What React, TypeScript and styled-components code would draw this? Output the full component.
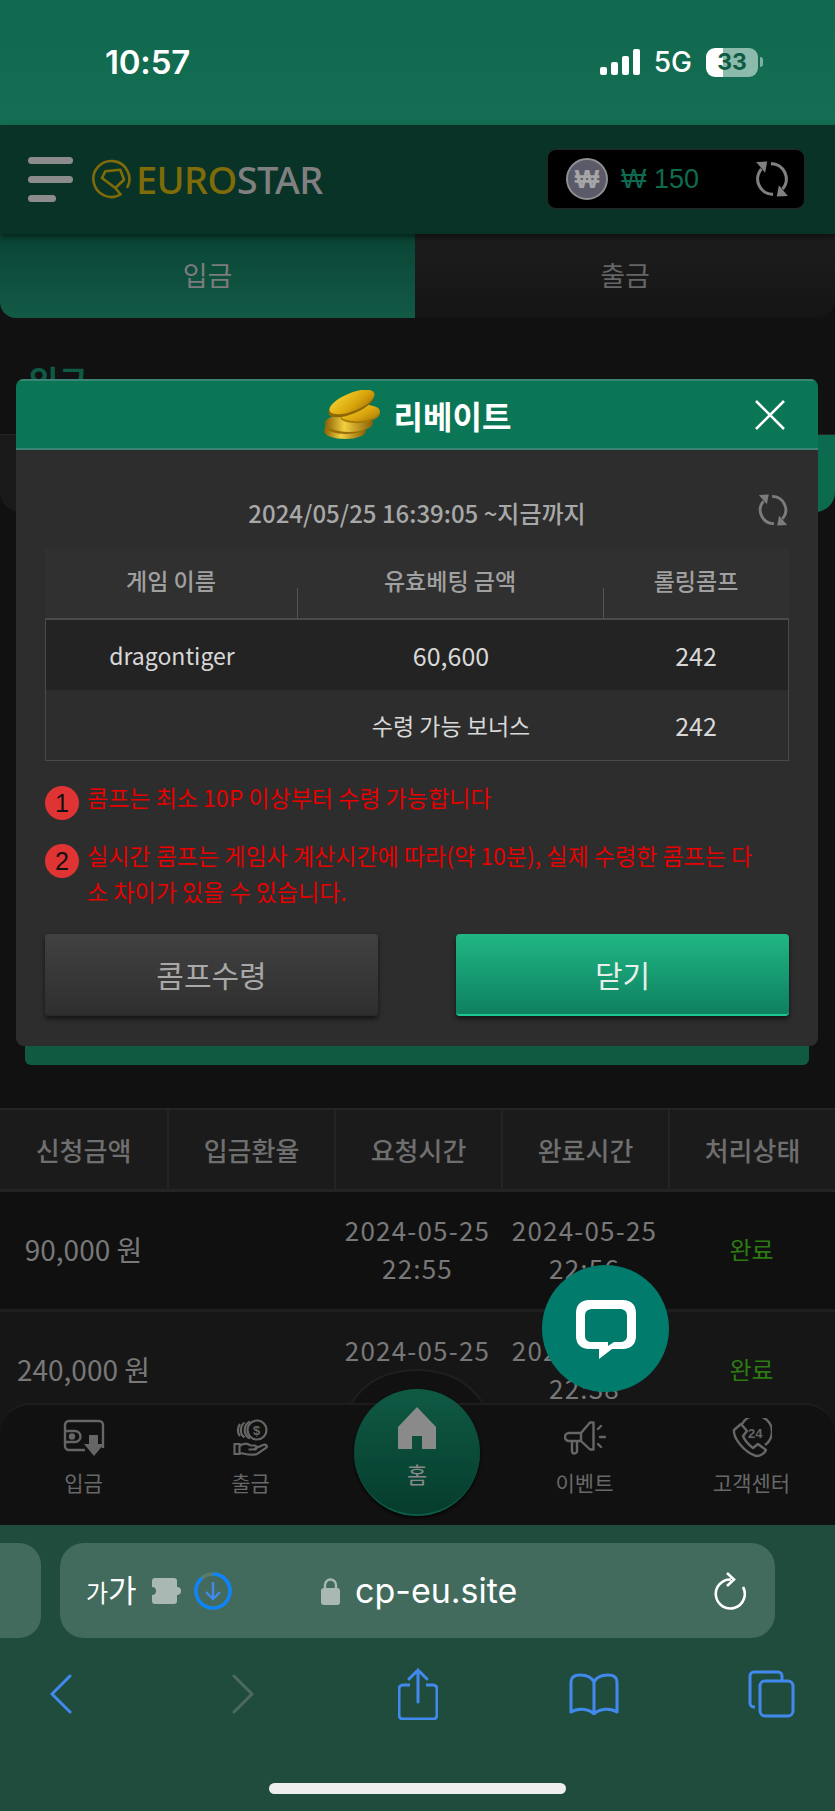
import React, { FunctionComponent } from 'react';
import styled, { createGlobalStyle } from 'styled-components';

const FONT = `"Noto Sans CJK KR", "Noto Sans", sans-serif`;

const GlobalStyle = createGlobalStyle`
    html, body {
        margin: 0;
        padding: 0;
        background: #111;
    }
    * {
        box-sizing: border-box;
    }
`;

const Phone = styled.div`
    width: 835px;
    height: 1811px;
    display: flex;
    flex-direction: column;
    overflow: hidden;
    font-family: ${FONT};
`;

/* ---------- iOS status bar ---------- */

const StatusBar = styled.div`
    height: 125px;
    flex: none;
    padding: 41px 72px 0 105px;
    display: flex;
    justify-content: space-between;
    align-items: flex-start;
    background: linear-gradient(180deg, #11694f, #136e53);
`;

const Clock = styled.div`
    font-family: Inter, sans-serif;
    font-size: 33px;
    line-height: 42px;
    font-weight: 600;
    letter-spacing: -0.2px;
    color: #fff;
`;

const StatusIcons = styled.div`
    display: flex;
    align-items: center;
    height: 42px;
`;

const NetworkLabel = styled.span`
    font-family: Inter, sans-serif;
    font-size: 28px;
    font-weight: 500;
    color: #fff;
    margin: 0 14px 0 13px;
`;

const Battery = styled.div`
    position: relative;
    width: 52px;
    height: 29px;
    border-radius: 9px;
    overflow: hidden;
    background: linear-gradient(90deg, #fff 0 33%, #8dbbab 33% 100%);
    font-family: Inter, sans-serif;
    font-size: 23px;
    line-height: 29px;
    font-weight: 700;
    text-align: center;
    color: #0f5a44;
`;

const BatteryNub = styled.div`
    width: 3px;
    height: 10px;
    margin-left: 2px;
    border-radius: 0 3px 3px 0;
    background: #7fb0a0;
`;

/* ---------- site header ---------- */

const Header = styled.header`
    height: 109px;
    flex: none;
    padding: 24px 30px 0 28px;
    display: flex;
    justify-content: space-between;
    align-items: flex-start;
    background: #0a3328;
    box-shadow: 0 3px 6px rgba(0, 0, 0, 0.5);
    position: relative;
    z-index: 1;
`;

const Brand = styled.div`
    display: flex;
    align-items: center;
    height: 60px;
`;

const Burger = styled.div`
    width: 45px;
    display: flex;
    flex-direction: column;
    gap: 12px;
    margin-right: 18px;
`;

const BurgerBar = styled.span<{ $short?: boolean }>`
    display: block;
    height: 7px;
    width: ${({ $short }) => ($short ? '28px' : '45px')};
    border-radius: 4px;
    background: #8c8c8c;
`;

const LogoText = styled.div`
    margin-left: 5px;
    font-family: 'Noto Sans', sans-serif;
    font-size: 38px;
    font-weight: 500;
    line-height: 60px;
    letter-spacing: -0.6px;
    color: #808080;
`;

const LogoGold = styled.span`
    color: #7f6c08;
`;

const Balance = styled.div`
    width: 258px;
    height: 60px;
    padding: 0 14px 0 18px;
    display: flex;
    align-items: center;
    background: #000;
    border: 1px solid #26262a;
    border-radius: 9px;
`;

const WonBadge = styled.div`
    width: 42px;
    height: 42px;
    flex: none;
    border-radius: 50%;
    background: #5a5a68;
    border: 2px solid #8f8f94;
    color: #a5a5a5;
    font-family: 'Liberation Sans', sans-serif;
    font-size: 26px;
    font-weight: 700;
    line-height: 38px;
    text-align: center;
`;

const BalanceValue = styled.div`
    flex: 1;
    margin-left: 13px;
    font-family: 'Liberation Sans', sans-serif;
    font-size: 27px;
    color: #0f6b4f;
`;

/* ---------- page behind the popup ---------- */

const Viewport = styled.main`
    position: relative;
    flex: 1;
    overflow: hidden;
    background: #111;
`;

const Tabs = styled.div`
    height: 84px;
    display: grid;
    grid-template-columns: 415px 1fr;
`;

const Tab = styled.div<{ $active?: boolean }>`
    display: flex;
    align-items: center;
    justify-content: center;
    padding-bottom: 3px;
    font-size: 27px;
    color: ${({ $active }) => ($active ? '#7c7c7c' : '#666')};
    background: ${({ $active }) =>
        $active ? 'linear-gradient(180deg, #0a4434, #125a46)' : 'linear-gradient(180deg, #1d1d1d, #151515)'};
    border-radius: ${({ $active }) => ($active ? '0 0 0 16px' : '0 0 16px 0')};
    margin-bottom: ${({ $active }) => ($active ? '0' : '1px')};
`;

const SectionTitle = styled.h2`
    margin: 40px 0 0 29px;
    font-size: 32px;
    line-height: 44px;
    font-weight: 700;
    color: #0e5a45;
`;

const FormBand = styled.div`
    height: 78px;
    margin-top: 32px;
    display: flex;
    border-top: 1px solid #242424;
    overflow: hidden;
    border-radius: 0 0 20px 20px;
    background: #1a1a1a;
`;

const BandFill = styled.div`
    flex: 1;
`;

const BandButton = styled.div`
    width: 100px;
    background: #0c6a4f;
`;

const SubmitStrip = styled.div`
    height: 60px;
    margin: 493px 26px 0 25px;
    border-radius: 0 0 6px 6px;
    background: #115a42;
`;

const HistoryHead = styled.div`
    margin-top: 43px;
    height: 84px;
    display: grid;
    grid-template-columns: repeat(5, 1fr);
    background: #1b1b1b;
    border-top: 2px solid #242424;
    border-bottom: 3px solid #242424;
`;

const HistoryHeadCell = styled.div`
    display: flex;
    align-items: center;
    justify-content: center;
    font-size: 26px;
    font-weight: 500;
    color: #6f6f6f;
    & + & {
        border-left: 2px solid #242424;
    }
`;

const HistoryRow = styled.div<{ $alt?: boolean }>`
    height: 120px;
    padding-bottom: 3px;
    display: grid;
    grid-template-columns: repeat(5, 1fr);
    background: ${({ $alt }) => ($alt ? '#161616' : '#101010')};
    border-bottom: 3px solid #1e1e1e;
`;

const HistoryCell = styled.div<{ $green?: boolean }>`
    display: flex;
    align-items: center;
    justify-content: center;
    text-align: center;
    font-size: ${({ $green }) => ($green ? '24px' : '26px')};
    line-height: 38px;
    letter-spacing: ${({ $green }) => ($green ? '0' : '1.2px')};
    white-space: nowrap;
    color: ${({ $green }) => ($green ? '#2c7a12' : '#787878')};
`;

const AmountCell = styled(HistoryCell)`
    grid-column: span 2;
    justify-content: flex-start;
    letter-spacing: 0;
`;

const AmountText = styled.span`
    display: block;
    width: 167px;
    text-align: center;
    font-size: 28px;
`;

/* ---------- bottom navigation ---------- */

const BottomNav = styled.nav`
    position: absolute;
    left: 0;
    right: 0;
    bottom: 0;
    height: 122px;
    display: grid;
    grid-template-columns: repeat(5, 1fr);
    background: #111;
    border-top: 2px solid #1d1d1d;
    border-radius: 30px 30px 0 0;
`;

const NavItem = styled.div`
    padding-top: 8px;
    display: flex;
    flex-direction: column;
    align-items: center;
    font-size: 21px;
    line-height: 30px;
    color: #686868;
`;

const NavIconBox = styled.div`
    height: 50px;
    display: flex;
    align-items: center;
    justify-content: center;
    margin-bottom: 4px;
`;

const NavArc = styled.svg`
    position: absolute;
    left: 346px;
    bottom: 120px;
`;

const HomeButton = styled.div`
    position: absolute;
    left: 354px;
    bottom: 9px;
    width: 126px;
    height: 127px;
    padding-top: 18px;
    display: flex;
    flex-direction: column;
    align-items: center;
    gap: 11px;
    border-radius: 50%;
    background: linear-gradient(180deg, #0f5a44, #063c2d);
    border-bottom: 2px solid #0d5a45;
    box-shadow: 0 2px 3px rgba(0, 0, 0, 0.8);
    font-size: 22px;
    line-height: 26px;
    color: #8a8a8a;
`;

const ChatButton = styled.div`
    position: absolute;
    left: 542px;
    top: 1031px;
    width: 127px;
    height: 127px;
    display: flex;
    align-items: center;
    justify-content: center;
    border-radius: 50%;
    background: #007b6c;
    z-index: 3;
`;

/* ---------- rebate popup ---------- */

const Modal = styled.section`
    position: absolute;
    left: 16px;
    top: 145px;
    width: 802px;
    height: 667px;
    border-radius: 8px;
    background: #2d2d2d;
    overflow: hidden;
    z-index: 2;
`;

const ModalHeader = styled.div`
    position: relative;
    height: 71px;
    display: flex;
    align-items: center;
    justify-content: center;
    gap: 13px;
    background: #0a7655;
    border-top: 2px solid #3a8573;
    border-bottom: 2px solid #3a8573;
`;

const ModalTitle = styled.h3`
    margin: 0;
    font-size: 32px;
    font-weight: 700;
    color: #fff;
`;

const CloseIcon = styled.svg`
    position: absolute;
    right: 32px;
    top: 18px;
`;

const DateRow = styled.div`
    position: relative;
    height: 99px;
    display: flex;
    align-items: center;
    justify-content: center;
    padding-top: 26px;
    font-size: 24px;
    font-weight: 500;
    color: #a8a8a8;
`;

const DateRefresh = styled.div`
    position: absolute;
    right: 29px;
    top: 44px;
`;

const RebateTable = styled.div`
    margin: 0 29px 0 29px;
`;

const RebateRow = styled.div`
    display: grid;
    grid-template-columns: 252px 306px 1fr;
`;

const RebateHead = styled(RebateRow)`
    height: 71px;
    background: #303030;
    border-bottom: 2px solid #4a4a4a;
`;

const RebateHeadCell = styled.div`
    position: relative;
    display: flex;
    align-items: center;
    justify-content: center;
    padding-bottom: 7px;
    font-size: 23px;
    font-weight: 500;
    color: #a0a0a0;
    & + &::before {
        content: '';
        position: absolute;
        left: 0;
        bottom: 0;
        width: 1px;
        height: 30px;
        background: #555;
    }
`;

const RebateBody = styled.div`
    border: 1px solid #4a4a4a;
    border-top: 0;
`;

const RebateBodyRow = styled(RebateRow)<{ $dark?: boolean }>`
    height: 70px;
    background: ${({ $dark }) => ($dark ? '#232323' : '#2d2d2d')};
`;

const RebateCell = styled.div<{ $numeric?: boolean }>`
    display: flex;
    align-items: center;
    justify-content: center;
    font-size: ${({ $numeric }) => ($numeric ? '25px' : '23px')};
    color: #d8d8d8;
`;

const Notes = styled.div`
    margin: 18px 20px 0 29px;
    display: flex;
    flex-direction: column;
    gap: 17px;
`;

const Note = styled.div`
    display: flex;
    align-items: flex-start;
    gap: 8px;
`;

const NoteBadge = styled.span`
    width: 34px;
    height: 34px;
    flex: none;
    margin-top: 7px;
    border-radius: 50%;
    background: #e03434;
    color: #111;
    font-family: 'Liberation Sans', sans-serif;
    font-size: 25px;
    line-height: 34px;
    text-align: center;
`;

const NoteText = styled.p`
    margin: 0;
    font-size: 23px;
    line-height: 36px;
    white-space: nowrap;
    color: #e80000;
`;

const ModalActions = styled.div`
    margin: 25px 29px 0 29px;
    display: grid;
    grid-template-columns: 333px 333px;
    justify-content: space-between;
`;

const ActionButton = styled.div<{ $primary?: boolean }>`
    height: 82px;
    display: flex;
    align-items: center;
    justify-content: center;
    font-size: 30px;
    border-radius: 4px;
    color: ${({ $primary }) => ($primary ? '#e8efe9' : '#a8a8a8')};
    background: ${({ $primary }) =>
        $primary ? 'linear-gradient(180deg, #20b684, #0e8060)' : 'linear-gradient(180deg, #414141, #2f2f2f)'};
    border-bottom: 2px solid ${({ $primary }) => ($primary ? '#1cc794' : '#2a2a2a')};
    box-shadow: 0 3px 5px rgba(0, 0, 0, 0.55);
`;

/* ---------- Safari chrome ---------- */

const Browser = styled.footer`
    height: 286px;
    flex: none;
    padding-top: 18px;
    background: #204c3e;
    display: flex;
    flex-direction: column;
`;

const AddressRow = styled.div`
    display: grid;
    grid-template-columns: 41px 715px;
    column-gap: 19px;
`;

const PrevTab = styled.div`
    height: 95px;
    background: #426b5d;
    border-radius: 0 22px 22px 0;
`;

const AddressBar = styled.div`
    position: relative;
    height: 95px;
    display: flex;
    align-items: center;
    padding: 0 29px 0 26px;
    background: #426b5d;
    border-radius: 24px;
`;

const TextSize = styled.span`
    width: 66px;
    font-size: 31px;
    line-height: 30px;
    color: #fff;
`;

const SmallGa = styled.span`
    font-size: 24px;
`;

const DownloadRing = styled.svg`
    margin-left: 8px;
`;

const AddressUrl = styled.div`
    position: absolute;
    left: 261px;
    top: 0;
    height: 95px;
    display: flex;
    align-items: center;
    gap: 15px;
    font-family: Inter, sans-serif;
    font-size: 34px;
    color: #fff;
`;

const ReloadIcon = styled.svg`
    margin-left: auto;
`;

const BrowserTools = styled.div`
    height: 76px;
    margin-top: 18px;
    padding-left: 50px;
    display: flex;
    align-items: center;
`;

const ToolSlot = styled.div<{ $gap: number }>`
    display: flex;
    margin-left: ${({ $gap }) => $gap}px;
`;

const HomeIndicator = styled.div`
    width: 297px;
    height: 11px;
    margin: 51px auto 0;
    border-radius: 6px;
    background: #eee;
`;

/* ---------- drawings ---------- */

const RefreshIcon: FunctionComponent<{ size: number; color: string }> = ({ size, color }) => (
    <svg width={size} height={size} viewBox="0 0 34 34" fill="none">
        <path d="M7 7.5A14.5 14.5 0 0 0 18 31.5" stroke={color} strokeWidth="3" />
        <path d="M27 26.5A14.5 14.5 0 0 0 16 2.5" stroke={color} strokeWidth="3" />
        <path d="M2 1L12.5 0.5L10.5 11Z" fill={color} />
        <path d="M32 33L21.5 33.5L23.5 23Z" fill={color} />
    </svg>
);

const LogoMark = () => (
    <svg width="40" height="40" viewBox="0 0 40 40" fill="none" stroke="#7f6c08" strokeWidth="2.6">
        <path d="M29.5 35.5A18 18 0 1 1 36.5 28" strokeLinecap="round" />
        <path d="M14.3 12.3L29.3 10.7L33 20.7L24.3 29L11 19Z" strokeLinejoin="round" />
        <path d="M24.3 29L30 36" />
    </svg>
);

const Coins = () => (
    <svg width="58" height="50" viewBox="0 0 58 50">
        <defs>
            <linearGradient id="coinFace" x1="0" y1="0" x2="1" y2="1">
                <stop offset="0" stopColor="#f6d52c" />
                <stop offset="0.6" stopColor="#d9a40c" />
                <stop offset="1" stopColor="#a87808" />
            </linearGradient>
            <linearGradient id="coinEdge" x1="0" y1="0" x2="1" y2="0">
                <stop offset="0" stopColor="#8a5f05" />
                <stop offset="0.4" stopColor="#f0cf40" />
                <stop offset="1" stopColor="#8a5f05" />
            </linearGradient>
        </defs>
        <ellipse cx="22" cy="41" rx="21" ry="8" fill="url(#coinEdge)" />
        <ellipse cx="23" cy="36" rx="21" ry="8" fill="#9a6f08" />
        <ellipse cx="26" cy="33" rx="24" ry="9" fill="url(#coinEdge)" />
        <ellipse cx="37" cy="25" rx="20" ry="8" transform="rotate(-6 37 25)" fill="#a67a08" />
        <ellipse cx="37" cy="23" rx="20" ry="8" transform="rotate(-6 37 23)" fill="url(#coinFace)" />
        <ellipse cx="28" cy="15" rx="24" ry="9" transform="rotate(-22 28 15)" fill="#8f6806" />
        <ellipse cx="29" cy="12" rx="24" ry="9" transform="rotate(-22 29 12)" fill="url(#coinFace)" />
    </svg>
);

const DepositIcon = () => (
    <svg width="42" height="38" viewBox="0 0 42 38" fill="none" stroke="#666" strokeWidth="2.4">
        <path d="M22 31H6a4 4 0 0 1-4-4V6a4 4 0 0 1 4-4h30a4 4 0 0 1 4 4v23" />
        <path d="M2 12h10a5 5 0 0 1 0 11H2" />
        <circle cx="9" cy="17.5" r="2" fill="#666" />
        <path d="M26 16h9v9h6L31 37L21 25h5Z" fill="#666" stroke="none" />
    </svg>
);

const WithdrawIcon = () => (
    <svg width="36" height="38" viewBox="0 0 36 38" fill="none" stroke="#666" strokeWidth="2.2">
        <circle cx="24" cy="11" r="9.5" />
        <path d="M17 2.5a9.5 9.5 0 0 0 0 17M11.5 3.5a9.5 9.5 0 0 0 0 15M7 5a9.5 9.5 0 0 0 0 12" />
        <path d="M1.5 25h5v10h-5zM6.5 27c4-3 8-3 11-.5h4a2 2 0 0 1 0 4h-6M21 30l9-4c3-1 5 1 3 3l-9 6c-6 2-11 0-17-1" />
        <text x="20" y="16" fontFamily="Liberation Sans, sans-serif" fontSize="13" fontWeight="700" fill="#666" stroke="none">
            $
        </text>
    </svg>
);

const EventIcon = () => (
    <svg width="42" height="36" viewBox="0 0 42 36" fill="none" stroke="#666" strokeWidth="2.4" strokeLinejoin="round">
        <path d="M5 13h12L26 2.5h3.5v27H26L17 21H5a4 4 0 0 1 0-8Z" />
        <path d="M8 21v10a2.5 2.5 0 0 0 5 0V21M17 13v8" />
        <path d="M34 9l3-3M36 17h5M34 24l3 3" strokeLinecap="round" />
    </svg>
);

const SupportIcon = () => (
    <svg width="40" height="40" viewBox="0 0 40 40" fill="none" stroke="#666" strokeWidth="2.4">
        <path
            d="M9 6L2 12C1 20 12 34 24 38C28 38.500 33 35 34 32L26 26L21 30C17 27 13 23 11 18L15 13Z"
            strokeLinejoin="round"
        />
        <path d="M10 6A16 16 0 1 1 33 27" />
        <text x="16" y="20" fontFamily="Liberation Sans, sans-serif" fontSize="13" fontWeight="700" fill="#666" stroke="none">
            24
        </text>
    </svg>
);

const HomeGlyph = () => (
    <svg width="38" height="42" viewBox="0 0 38 42">
        <path d="M19 0L38 20V42H24V29H14V42H0V20Z" fill="#8a8a8a" />
    </svg>
);

const ChatGlyph = () => (
    <svg width="62" height="60" viewBox="0 0 62 60">
        <path
            fillRule="evenodd"
            fill="#fff"
            d="M14 1H48C56 1 61 6 61 14V37C61 45 56 50 48 50H37L24 60V50H14C6 50 1 45 1 37V14C1 6 6 1 14 1ZM18 10C13 10 10 12 10 17V37C10 41 13 43 17 43H33V47L39 43H45C49 43 52 41 52 37V17C52 12 49 10 45 10Z"
        />
    </svg>
);

const Puzzle = () => (
    <svg width="34" height="28" viewBox="0 0 34 28">
        <path
            fill="#a9b8b3"
            d="M3 1H22a3 3 0 0 1 3 3V10a4 4 0 1 1 0 8V24a3 3 0 0 1-3 3H3a3 3 0 0 1-3-3V18a4 4 0 0 0 0-8V4a3 3 0 0 1 3-3Z"
        />
    </svg>
);

const Lock = () => (
    <svg width="19" height="28" viewBox="0 0 19 28">
        <path d="M4 12V8a5.5 5.5 0 0 1 11 0v4" fill="none" stroke="#a9b8b3" strokeWidth="2.4" />
        <rect x="0" y="11" width="19" height="17" rx="3" fill="#a9b8b3" />
    </svg>
);

const BLUE = '#4289ee';

const BackIcon = () => (
    <svg width="22" height="40" viewBox="0 0 22 40" fill="none" stroke={BLUE} strokeWidth="3" strokeLinecap="round">
        <path d="M20 2L2 20L20 38" strokeLinejoin="round" />
    </svg>
);

const ForwardIcon = () => (
    <svg width="22" height="40" viewBox="0 0 22 40" fill="none" stroke="#4e6a60" strokeWidth="3" strokeLinecap="round">
        <path d="M2 2L20 20L2 38" strokeLinejoin="round" />
    </svg>
);

const ShareIcon = () => (
    <svg width="40" height="52" viewBox="0 0 40 52" fill="none" stroke={BLUE} strokeWidth="3">
        <path d="M12 17H5a4 4 0 0 0-4 4v26a4 4 0 0 0 4 4h30a4 4 0 0 0 4-4V21a4 4 0 0 0-4-4h-7" />
        <path d="M20 34V2M11 11L20 2L29 11" strokeLinecap="round" />
    </svg>
);

const BookIcon = () => (
    <svg width="50" height="42" viewBox="0 0 50 42" fill="none" stroke={BLUE} strokeWidth="3" strokeLinejoin="round">
        <path d="M25 9C22 3 16 2 11 2C6 2 2 4 2 9V39C8 35 19 35 25 41C31 35 42 35 48 39V9C48 4 44 2 39 2C34 2 28 3 25 9ZM25 9V41" />
    </svg>
);

const TabsIcon = () => (
    <svg width="47" height="48" viewBox="0 0 47 48" fill="none" stroke={BLUE} strokeWidth="3">
        <path d="M7 37H6a4 4 0 0 1-4-4V6a4 4 0 0 1 4-4h24a4 4 0 0 1 4 4v4" />
        <rect x="12" y="11" width="33" height="35" rx="5" />
    </svg>
);

/* ---------- data ---------- */

const HISTORY_HEAD = ['신청금액', '입금환율', '요청시간', '완료시간', '처리상태'];

const HISTORY = [
    { amount: '90,000 원', requested: '22:55', finished: '22:56' },
    { amount: '240,000 원', requested: '22:36', finished: '22:38' },
];

const App: FunctionComponent = () => (
    <Phone>
        <GlobalStyle />
        <StatusBar>
            <Clock>10:57</Clock>
            <StatusIcons>
                <svg width="41" height="26" viewBox="0 0 41 26" fill="#fff">
                    <rect x="0" y="18" width="7" height="8" rx="2" />
                    <rect x="11" y="13" width="7" height="13" rx="2" />
                    <rect x="22" y="7" width="7" height="19" rx="2" />
                    <rect x="33" y="0" width="7" height="26" rx="2" />
                </svg>
                <NetworkLabel>5G</NetworkLabel>
                <Battery>33</Battery>
                <BatteryNub />
            </StatusIcons>
        </StatusBar>

        <Header>
            <Brand>
                <Burger>
                    <BurgerBar />
                    <BurgerBar />
                    <BurgerBar $short />
                </Burger>
                <LogoMark />
                <LogoText>
                    <LogoGold>EURO</LogoGold>STAR
                </LogoText>
            </Brand>
            <Balance>
                <WonBadge>₩</WonBadge>
                <BalanceValue>₩ 150</BalanceValue>
                <RefreshIcon size={36} color="#808080" />
            </Balance>
        </Header>

        <Viewport>
            <Tabs>
                <Tab $active>입금</Tab>
                <Tab>출금</Tab>
            </Tabs>
            <SectionTitle>입금</SectionTitle>
            <FormBand>
                <BandFill />
                <BandButton />
            </FormBand>
            <SubmitStrip />

            <HistoryHead>
                {HISTORY_HEAD.map(label => (
                    <HistoryHeadCell key={label}>{label}</HistoryHeadCell>
                ))}
            </HistoryHead>
            {HISTORY.map((row, index) => (
                <HistoryRow key={row.amount} $alt={index === 1}>
                    <AmountCell>
                        <AmountText>{row.amount}</AmountText>
                    </AmountCell>
                    <HistoryCell>
                        2024-05-25
                        <br />
                        {row.requested}
                    </HistoryCell>
                    <HistoryCell>
                        2024-05-25
                        <br />
                        {row.finished}
                    </HistoryCell>
                    <HistoryCell $green>완료</HistoryCell>
                </HistoryRow>
            ))}

            <NavArc width="142" height="36" viewBox="0 0 142 36" fill="#111" stroke="#1f1f1f" strokeWidth="2">
                <path d="M4 36C20 10 45 1 71 1C97 1 122 10 138 36" />
            </NavArc>
            <BottomNav>
                <NavItem>
                    <NavIconBox>
                        <DepositIcon />
                    </NavIconBox>
                    입금
                </NavItem>
                <NavItem>
                    <NavIconBox>
                        <WithdrawIcon />
                    </NavIconBox>
                    출금
                </NavItem>
                <NavItem />
                <NavItem>
                    <NavIconBox>
                        <EventIcon />
                    </NavIconBox>
                    이벤트
                </NavItem>
                <NavItem>
                    <NavIconBox>
                        <SupportIcon />
                    </NavIconBox>
                    고객센터
                </NavItem>
            </BottomNav>
            <HomeButton>
                <HomeGlyph />홈
            </HomeButton>
            <ChatButton>
                <ChatGlyph />
            </ChatButton>

            <Modal>
                <ModalHeader>
                    <Coins />
                    <ModalTitle>리베이트</ModalTitle>
                    <CloseIcon width="32" height="32" viewBox="0 0 32 32" stroke="#fff" strokeWidth="2.6">
                        <path d="M2 2L30 30M30 2L2 30" />
                    </CloseIcon>
                </ModalHeader>
                <DateRow>
                    2024/05/25 16:39:05 ~지금까지
                    <DateRefresh>
                        <RefreshIcon size={32} color="#7c7c7c" />
                    </DateRefresh>
                </DateRow>
                <RebateTable>
                    <RebateHead>
                        <RebateHeadCell>게임 이름</RebateHeadCell>
                        <RebateHeadCell>유효베팅 금액</RebateHeadCell>
                        <RebateHeadCell>롤링콤프</RebateHeadCell>
                    </RebateHead>
                    <RebateBody>
                        <RebateBodyRow $dark>
                            <RebateCell>dragontiger</RebateCell>
                            <RebateCell $numeric>60,600</RebateCell>
                            <RebateCell $numeric>242</RebateCell>
                        </RebateBodyRow>
                        <RebateBodyRow>
                            <RebateCell />
                            <RebateCell>수령 가능 보너스</RebateCell>
                            <RebateCell $numeric>242</RebateCell>
                        </RebateBodyRow>
                    </RebateBody>
                </RebateTable>
                <Notes>
                    <Note>
                        <NoteBadge>1</NoteBadge>
                        <NoteText>콤프는 최소 10P 이상부터 수령 가능합니다</NoteText>
                    </Note>
                    <Note>
                        <NoteBadge>2</NoteBadge>
                        <NoteText>
                            실시간 콤프는 게임사 계산시간에 따라(약 10분), 실제 수령한 콤프는 다
                            <br />소 차이가 있을 수 있습니다.
                        </NoteText>
                    </Note>
                </Notes>
                <ModalActions>
                    <ActionButton>콤프수령</ActionButton>
                    <ActionButton $primary>닫기</ActionButton>
                </ModalActions>
            </Modal>
        </Viewport>

        <Browser>
            <AddressRow>
                <PrevTab />
                <AddressBar>
                    <TextSize>
                        <SmallGa>가</SmallGa>가
                    </TextSize>
                    <Puzzle />
                    <DownloadRing width="38" height="38" viewBox="0 0 38 38" fill="none">
                        <circle cx="19" cy="19" r="17" stroke="#5d7a70" strokeWidth="3.4" />
                        <path d="M19 2A17 17 0 1 1 8 6" stroke="#0a84ff" strokeWidth="3.4" />
                        <path d="M19 10V27M12 20L19 27L26 20" stroke={BLUE} strokeWidth="2.4" />
                    </DownloadRing>
                    <AddressUrl>
                        <Lock />
                        cp-eu.site
                    </AddressUrl>
                    <ReloadIcon width="32" height="38" viewBox="0 0 32 38" fill="none" stroke="#fff" strokeWidth="2.6">
                        <path d="M17 7.500A14.500 14.500 0 1 0 29 15" />
                        <path d="M13 1L20 7.500L13 14" />
                    </ReloadIcon>
                </AddressBar>
            </AddressRow>
            <BrowserTools>
                <BackIcon />
                <ToolSlot $gap={160}>
                    <ForwardIcon />
                </ToolSlot>
                <ToolSlot $gap={144}>
                    <ShareIcon />
                </ToolSlot>
                <ToolSlot $gap={131}>
                    <BookIcon />
                </ToolSlot>
                <ToolSlot $gap={129}>
                    <TabsIcon />
                </ToolSlot>
            </BrowserTools>
            <HomeIndicator />
        </Browser>
    </Phone>
);

export default App;
